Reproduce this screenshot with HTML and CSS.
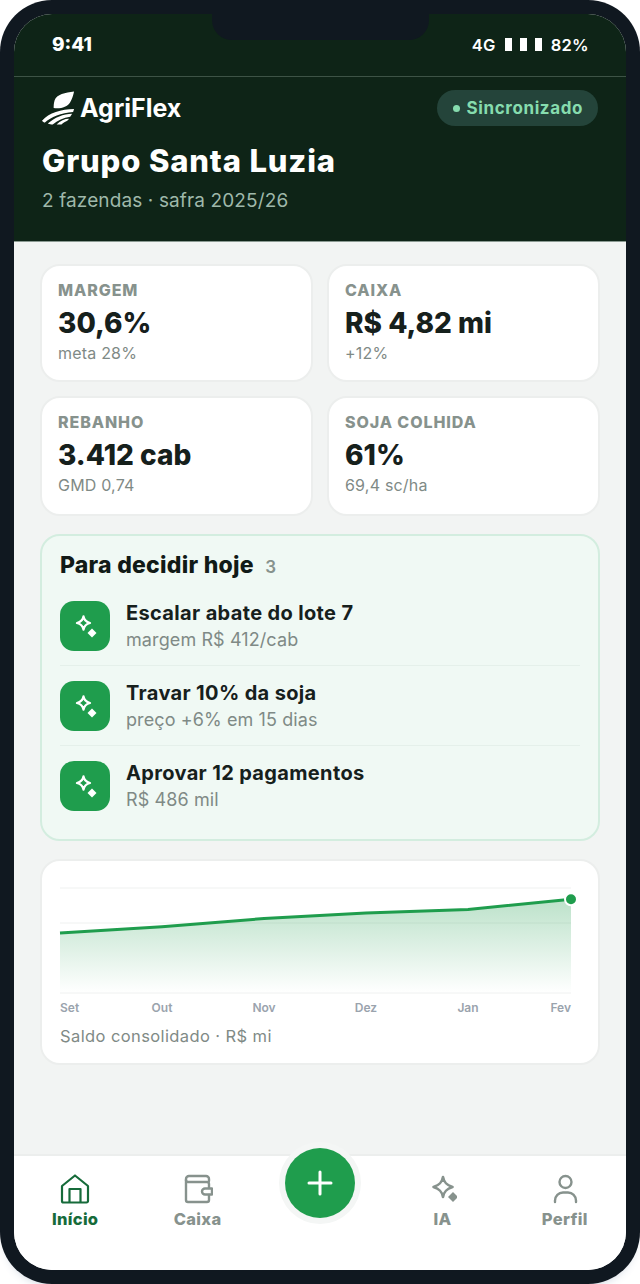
FILE: index.html
```html
<!DOCTYPE html>
<html lang="pt-BR">
	<head>
		<meta charset="UTF-8">
		<meta name="viewport" content="width=device-width, initial-scale=1.0">
		<title>AgriFlex | Início</title>
		<link rel="stylesheet" href="styles.css">
	</head>
	<body>
		<div class="phone">
			<div class="notch"></div>
			<div class="screen">
				<header class="top">
					<div class="status-bar">
						<span class="clock">9:41</span>
						<div class="status-right">
							<span>4G</span>
							<span class="signal"><i></i><i></i><i></i></span>
							<span>82%</span>
						</div>
					</div>
					<div class="top-body">
						<div class="brand-row">
							<div class="brand">
								<svg class="brand-mark" viewBox="0 0 36 36" fill="#fff">
									<path d="M33 1C24 2 15 4 13 10c-1 3-1 6-1 8 7 1 14-1 17-6 2-3 3-7 4-11z"/>
									<path d="M33 19C20 19 7 23 0 31c1 1 2 2 3 2C9 27 20 23 32 22z"/>
									<path d="M31 24C22 24 13 28 6 34c2 1 3 1 5 1C16 31 22 28 29 27z"/>
									<path d="M28 29C23 29 19 31 15 35h5c2-2 4-3 6-4z"/>
								</svg>
								<span class="brand-name">AgriFlex</span>
							</div>
							<div class="sync"><span class="sync-dot"></span>Sincronizado</div>
						</div>
						<h1 class="group-name">Grupo Santa Luzia</h1>
						<p class="group-sub">2 fazendas · safra 2025/26</p>
					</div>
				</header>

				<main class="content">
					<section class="kpis">
						<div class="kpi">
							<div class="kpi-label">MARGEM</div>
							<div class="kpi-value">30,6%</div>
							<div class="kpi-note">meta 28%</div>
						</div>
						<div class="kpi">
							<div class="kpi-label">CAIXA</div>
							<div class="kpi-value">R$ 4,82 mi</div>
							<div class="kpi-note">+12%</div>
						</div>
						<div class="kpi">
							<div class="kpi-label">REBANHO</div>
							<div class="kpi-value">3.412 cab</div>
							<div class="kpi-note">GMD 0,74</div>
						</div>
						<div class="kpi">
							<div class="kpi-label">SOJA COLHIDA</div>
							<div class="kpi-value">61%</div>
							<div class="kpi-note">69,4 sc/ha</div>
						</div>
					</section>

					<section class="decide">
						<h2 class="decide-title">Para decidir hoje <span class="decide-count">3</span></h2>
						<div class="decide-row">
							<div class="spark-box">
								<svg viewBox="0 0 24 24" fill="none" stroke="#fff" stroke-width="2.300" stroke-linejoin="round"><path d="M10.500 2.500c.6 3.600 2.400 5.400 6.500 6.500-4.100 1.100-5.900 2.900-6.500 6.500C9.900 11.900 8.100 10.100 4 9c4.100-1.100 5.900-2.900 6.500-6.500z"/><path d="M19 14.500l4.500 4.500-4.500 4.500-4.500-4.500z" fill="#fff" stroke="none"/></svg>
							</div>
							<div class="decide-text">
								<div class="decide-name">Escalar abate do lote 7</div>
								<div class="decide-note">margem R$ 412/cab</div>
							</div>
						</div>
						<div class="decide-row">
							<div class="spark-box">
								<svg viewBox="0 0 24 24" fill="none" stroke="#fff" stroke-width="2.300" stroke-linejoin="round"><path d="M10.500 2.500c.6 3.600 2.400 5.400 6.500 6.500-4.100 1.100-5.900 2.900-6.500 6.500C9.900 11.900 8.100 10.100 4 9c4.100-1.100 5.900-2.900 6.500-6.500z"/><path d="M19 14.500l4.500 4.500-4.500 4.500-4.500-4.500z" fill="#fff" stroke="none"/></svg>
							</div>
							<div class="decide-text">
								<div class="decide-name">Travar 10% da soja</div>
								<div class="decide-note">preço +6% em 15 dias</div>
							</div>
						</div>
						<div class="decide-row">
							<div class="spark-box">
								<svg viewBox="0 0 24 24" fill="none" stroke="#fff" stroke-width="2.300" stroke-linejoin="round"><path d="M10.500 2.500c.6 3.600 2.400 5.400 6.500 6.500-4.100 1.100-5.900 2.900-6.500 6.500C9.900 11.900 8.100 10.100 4 9c4.100-1.100 5.900-2.900 6.500-6.500z"/><path d="M19 14.500l4.500 4.500-4.500 4.500-4.500-4.500z" fill="#fff" stroke="none"/></svg>
							</div>
							<div class="decide-text">
								<div class="decide-name">Aprovar 12 pagamentos</div>
								<div class="decide-note">R$ 486 mil</div>
							</div>
						</div>
					</section>

					<section class="chart-card">
						<svg class="chart" viewBox="0 0 520 136">
							<defs>
								<linearGradient id="area" x1="0" y1="0" x2="0" y2="1">
									<stop offset="0" stop-color="#1f9d4d" stop-opacity="0.3"/>
									<stop offset="1" stop-color="#1f9d4d" stop-opacity="0"/>
								</linearGradient>
							</defs>
							<path class="grid" d="M0 8h511M0 43h511M0 113h511"/>
							<path d="M0 53L102 46.700 204 38.500 306 33 408 29.500 511 19.300V113H0z" fill="url(#area)"/>
							<path class="line" d="M0 53L102 46.700 204 38.500 306 33 408 29.500 511 19.300"/>
							<circle class="dot" cx="511" cy="19.300" r="6"/>
							<text class="tick" x="0" y="132">Set</text>
							<text class="tick" x="102" y="132" text-anchor="middle">Out</text>
							<text class="tick" x="204" y="132" text-anchor="middle">Nov</text>
							<text class="tick" x="306" y="132" text-anchor="middle">Dez</text>
							<text class="tick" x="408" y="132" text-anchor="middle">Jan</text>
							<text class="tick" x="511" y="132" text-anchor="end">Fev</text>
						</svg>
						<div class="chart-caption">Saldo consolidado · R$ mi</div>
					</section>
				</main>

				<nav class="tabs">
					<a class="tab tab-active">
						<svg viewBox="0 0 30 30" fill="none" stroke="currentColor" stroke-width="2.200" stroke-linejoin="round" stroke-linecap="round"><path d="M2 12L15 1.500 28 12v15a1.500 1.500 0 0 1-1.500 1.500h-23A1.500 1.500 0 0 1 2 27z"/><path d="M9.500 28V15h11v13"/></svg>
						<span>Início</span>
					</a>
					<a class="tab">
						<svg viewBox="0 0 30 30" fill="none" stroke="currentColor" stroke-width="2.400" stroke-linejoin="round" stroke-linecap="round"><path d="M26 7V5a3 3 0 0 0-3-3H6a3 3 0 0 0-3 3v21a2 2 0 0 0 2 2h19a2 2 0 0 0 2-2v-5"/><path d="M3 6a2 2 0 0 0 2 2h19a2 2 0 0 1 2 2v4"/><path d="M22 14.500h7v6h-7a3 3 0 0 1 0-6z"/></svg>
						<span>Caixa</span>
					</a>
					<div class="tab-gap"></div>
					<a class="tab">
						<svg viewBox="0 0 30 30" fill="none" stroke="currentColor" stroke-width="2.600" stroke-linejoin="round"><path d="M16 3c1 5.500 3.500 8 9.500 10-6 2-8.500 4.500-9.500 10-1-5.500-3.500-8-9.500-10 6-2 8.500-4.500 9.500-10z"/><path d="M26 18l5 5-5 5-5-5z" fill="currentColor" stroke="none"/></svg>
						<span>IA</span>
					</a>
					<a class="tab">
						<svg viewBox="0 0 30 30" fill="none" stroke="currentColor" stroke-width="2.400" stroke-linecap="round"><circle cx="15.500" cy="8" r="6"/><path d="M5 28v-1.500a8 8 0 0 1 8-8h5a8 8 0 0 1 8 8V28"/></svg>
						<span>Perfil</span>
					</a>
				</nav>
				<button class="fab" aria-label="Adicionar">
					<svg viewBox="0 0 28 28" fill="none" stroke="#fff" stroke-width="3" stroke-linecap="round"><path d="M14 3v22M3 14h22"/></svg>
				</button>
			</div>
		</div>
	</body>
</html>
```

FILE: styles.css
```css
:root {
	--ink: #16201c;
	--muted: #7f8a86;
	--soft: #87928d;
	--green: #1f9d4d;
	--green-dark: #166b3a;
	--forest: #0e2417;
	--line: #eceeed;
}

* {
	box-sizing: border-box;
	margin: 0;
	padding: 0;
}

html, body {
	height: 100%;
}

body {
	font-family: Inter, "Noto Sans", sans-serif;
	background: #fff;
	color: var(--ink);
}

/* Device frame */
.phone {
	position: relative;
	width: 640px;
	height: 1284px;
	background: #101820;
	border-radius: 52px;
	padding: 14px;
	box-shadow: 0 6px 10px -6px rgba(60, 90, 130, 0.3);
}

.notch {
	position: absolute;
	top: 14px;
	left: 212px;
	width: 217px;
	height: 26px;
	background: #101820;
	border-radius: 0 0 20px 20px;
	z-index: 5;
}

.screen {
	position: relative;
	height: 1256px;
	border-radius: 38px;
	overflow: hidden;
	background: #f2f4f3;
	display: flex;
	flex-direction: column;
}

/* Header */
.top {
	background: var(--forest);
	height: 228px;
	border-bottom: 1px solid #8b9a92;
	flex: none;
	color: #fff;
}

.status-bar {
	height: 63px;
	padding: 0 37px 1px 38px;
	display: flex;
	align-items: center;
	justify-content: space-between;
	border-bottom: 1px solid #3d5346;
}

.clock {
	font-size: 19px;
	font-weight: 800;
}

.status-right {
	display: flex;
	align-items: center;
	gap: 9px;
	font-weight: 600;
	font-size: 16.500px;
	letter-spacing: 0.3px;
}

.signal {
	display: flex;
	gap: 8px;
}

.signal i {
	display: block;
	width: 7px;
	height: 13px;
	background: #fff;
}

.top-body {
	padding: 13px 28px 0;
}

.brand-row {
	display: flex;
	align-items: center;
	justify-content: space-between;
}

.brand {
	display: flex;
	align-items: center;
	gap: 3px;
}

.brand-mark {
	width: 35px;
	height: 36px;
}

.brand-name {
	font-size: 25px;
	font-weight: 700;
	letter-spacing: 0;
}

.sync {
	display: flex;
	align-items: center;
	gap: 7px;
	height: 36px;
	padding: 0 15px 0 16px;
	border-radius: 18px;
	background: #24443a;
	color: #86dcae;
	font-size: 17px;
	font-weight: 700;
	letter-spacing: 0.6px;
}

.sync-dot {
	width: 7px;
	height: 7px;
	border-radius: 50%;
	background: #86dcae;
}

.group-name {
	font-size: 31px;
	font-weight: 800;
	line-height: 38px;
	margin-top: 16px;
	letter-spacing: 0.85px;
}

.group-sub {
	font-size: 19px;
	line-height: 24px;
	margin-top: 9px;
	letter-spacing: 0.12px;
	color: #9fb8aa;
}

/* Main column */
.content {
	flex: 1;
	padding: 22px 26px 0;
	display: flex;
	flex-direction: column;
}

.kpis {
	display: grid;
	grid-template-columns: 273px 273px;
	grid-template-rows: 118px 120px;
	gap: 14px;
}

.kpi {
	background: #fff;
	border: 2px solid var(--line);
	border-radius: 20px;
	padding: 14px 16px 0;
}

.kpi-label {
	font-size: 16px;
	line-height: 20px;
	font-weight: 800;
	letter-spacing: 0.9px;
	color: var(--soft);
}

.kpi-value {
	font-size: 28px;
	line-height: 36px;
	font-weight: 800;
	margin-top: 5px;
}

.kpi-note {
	font-size: 16px;
	line-height: 20px;
	letter-spacing: 0.2px;
	color: var(--muted);
	margin-top: 2px;
}

/* Decisions panel */
.decide {
	margin-top: 18px;
	height: 307px;
	background: #f0f9f4;
	border: 2px solid #d3eddf;
	border-radius: 20px;
	padding: 15px 18px 0;
}

.decide-title {
	font-size: 23px;
	line-height: 28px;
	font-weight: 800;
	letter-spacing: 0.25px;
	margin-bottom: 5px;
	color: #111a16;
}

.decide-count {
	font-size: 17px;
	font-weight: 600;
	color: var(--soft);
	margin-left: 6px;
}

.decide-row {
	display: flex;
	align-items: center;
	gap: 16px;
	height: 80px;
	border-bottom: 1px solid #e5f0ea;
}

.decide-row:last-child {
	border-bottom: none;
}

.spark-box {
	flex: none;
	width: 50px;
	height: 50px;
	border-radius: 14px;
	background: var(--green);
	display: flex;
	align-items: center;
	justify-content: center;
}

.spark-box svg {
	width: 24px;
	height: 24px;
}

.decide-name {
	font-size: 20px;
	line-height: 26px;
	font-weight: 700;
	letter-spacing: 0.35px;
}

.decide-note {
	font-size: 18px;
	line-height: 24px;
	letter-spacing: 0.1px;
	color: var(--muted);
	margin-top: 2px;
}

/* Chart */
.chart-card {
	margin-top: 18px;
	height: 206px;
	background: #fff;
	border: 2px solid var(--line);
	border-radius: 20px;
	padding: 19px 18px 0;
}

.chart {
	display: block;
	width: 520px;
	height: 136px;
	overflow: visible;
}

.grid {
	fill: none;
	stroke: #eff1f0;
	stroke-width: 1;
}

.line {
	fill: none;
	stroke: var(--green);
	stroke-width: 3;
}

.dot {
	fill: var(--green);
	stroke: #fff;
	stroke-width: 2;
}

.tick {
	font-size: 12px;
	font-weight: 600;
	fill: #9aa3ad;
}

.chart-caption {
	font-size: 16.500px;
	line-height: 22px;
	letter-spacing: 0.4px;
	color: var(--muted);
	margin-top: 9px;
}

/* Bottom navigation */
.tabs {
	flex: none;
	height: 116px;
	background: #fff;
	border-top: 2px solid var(--line);
	display: grid;
	grid-template-columns: repeat(5, 1fr);
	padding: 18px 0 0;
}

.tab {
	display: flex;
	flex-direction: column;
	align-items: center;
	gap: 5px;
	color: var(--soft);
	font-size: 16.500px;
	line-height: 20px;
	font-weight: 800;
	letter-spacing: 0.3px;
}

.tab svg {
	width: 30px;
	height: 30px;
}

.tab-active {
	color: var(--green-dark);
}

.fab {
	position: absolute;
	left: 271px;
	bottom: 52px;
	width: 70px;
	height: 70px;
	border: none;
	border-radius: 50%;
	background: var(--green);
	box-shadow: 0 0 0 6px #f4f6f5;
	display: flex;
	align-items: center;
	justify-content: center;
}

.fab svg {
	width: 28px;
	height: 28px;
}
```
